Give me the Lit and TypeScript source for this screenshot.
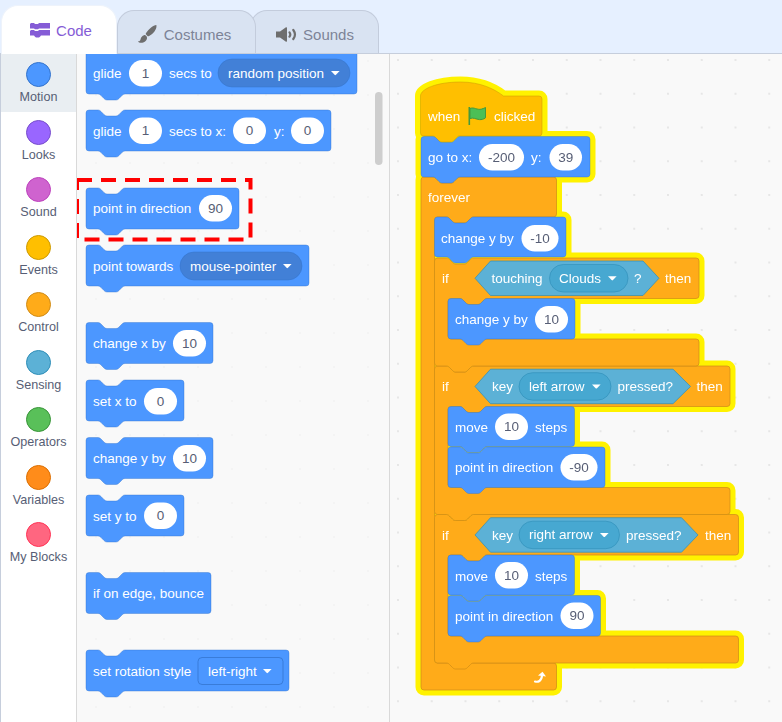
import { LitElement, html, css, svg } from "lit";
import { customElement } from "lit/decorators.js";

const NOTCH = "c1.5 0 2.25 .75 3 1.5l3 3c.75 .75 1.5 1.5 3 1.5h9c1.5 0 2.25-.75 3-1.5l3-3c.75-.75 1.5-1.5 3-1.5";
const NOTCH_BACK = "c-1.5 0-2.25 .75-3 1.5l-3 3c-.75 .75-1.5 1.5-3 1.5h-9c-1.5 0-2.25-.75-3-1.5l-3-3c-.75-.75-1.5-1.5-3-1.5";
const R = 3;

function stackPath(x: number, y: number, w: number, h: number) {
  const r = x + w;
  const b = y + h;
  return `M${x} ${y + R}a${R} ${R} 0 0 1 ${R}-${R}H${x + 12}${NOTCH}H${r - R}a${R} ${R} 0 0 1 ${R} ${R}V${b - R}a${R} ${R} 0 0 1-${R} ${R}H${x + 39}${NOTCH_BACK}H${x + R}a${R} ${R} 0 0 1-${R}-${R}Z`;
}

function hatPath(x: number, y: number, w: number, h: number) {
  const r = x + w;
  const b = y + h;
  return `M${x} ${y}C${x} ${y - 7} ${x + 16} ${y - 14} ${x + 40} ${y - 14}C${x + 60} ${y - 14} ${x + 74} ${y - 7} ${x + 83} ${y}H${r - R}a${R} ${R} 0 0 1 ${R} ${R}V${b - R}a${R} ${R} 0 0 1-${R} ${R}H${x + 39}${NOTCH_BACK}H${x + R}a${R} ${R} 0 0 1-${R}-${R}Z`;
}

/** C-shaped block: header row, arm down the left, foot row. */
function cPath(x: number, y: number, headW: number, headH: number, armX: number, footY: number, footW: number, footH: number, foot: boolean) {
  const hr = x + headW;
  const hb = y + headH;
  const fr = x + footW;
  const fb = footY + footH;
  const tail = foot ? `H${x + 39}${NOTCH_BACK}H${x + R}` : `H${x + R}`;
  return `M${x} ${y + R}a${R} ${R} 0 0 1 ${R}-${R}H${x + 12}${NOTCH}H${hr - R}a${R} ${R} 0 0 1 ${R} ${R}V${hb - R}a${R} ${R} 0 0 1-${R} ${R}H${armX + 39}${NOTCH_BACK}H${armX + R}a${R} ${R} 0 0 0-${R} ${R}V${footY - R}a${R} ${R} 0 0 0 ${R} ${R}H${fr - R}a${R} ${R} 0 0 1 ${R} ${R}V${fb - R}a${R} ${R} 0 0 1-${R} ${R}${tail}a${R} ${R} 0 0 1-${R}-${R}Z`;
}

function hexPath(x1: number, x2: number, x3: number, x4: number, top: number, bottom: number) {
  const mid = (top + bottom) / 2;
  return `M${x1} ${mid}L${x2} ${top}H${x3}L${x4} ${mid}L${x3} ${bottom}H${x2}Z`;
}

const label = (x: number, y: number, s: string) =>
  svg`<text class="lbl" x=${x} y=${y}>${s}</text>`;

const pill = (x: number, w: number, top: number, h: number, value: string) => svg`
  <rect class="pill" x=${x} y=${top} width=${w} height=${h} rx=${h / 2}></rect>
  <text class="val" x=${x + w / 2} y=${top + h / 2 + 4.5}>${value}</text>`;

const arrow = (x: number, cy: number) =>
  svg`<path class="arrow" d="M${x} ${cy - 2}h8.6l-3.6 3.8a1 1 0 0 1-1.4 0Z"></path>`;

const dropdown = (cls: string, x: number, w: number, top: number, h: number, rx: number, textX: number, value: string, arrowX: number) => svg`
  <rect class=${cls} x=${x} y=${top} width=${w} height=${h} rx=${rx}></rect>
  <text class="lbl" x=${textX} y=${top + h / 2 + 4.5}>${value}</text>
  ${arrow(arrowX, top + h / 2)}`;

const stack = (x: number, y: number, w: number, h: number) =>
  svg`<path class="motion" d=${stackPath(x, y, w, h)}></path>`;

const pointBlock = (y: number, w: number, pillW: number, value: string) => svg`
  ${stack(448, y, w, 40.5)}
  ${label(455, y + 25, "point in direction")}
  ${pill(560.5, pillW, y + 7, 26.5, value)}`;

const moveBlock = (y: number) => svg`
  ${stack(448, y, 126.5, 40)}
  ${label(455, y + 25.5, "move")}
  ${pill(495, 33, y + 7, 26.5, "10")}
  ${label(535, y + 25.5, "steps")}`;

const hexBool = (x3: number, x4: number, top: number) =>
  svg`<path class="sensing" d=${hexPath(475, 490.5, x3, x4, top, top + 34.5)}></path>`;

/* outlines of the running script, drawn once as the glow and once as the blocks */
const SCRIPT = {
  hat: hatPath(420.5, 96, 121.5, 40),
  goto: stackPath(421, 136.5, 169, 40.5),
  forever: cPath(421, 177, 135.5, 40, 434.5, 663, 135.5, 27, false),
  changeA: stackPath(434.5, 217, 131.5, 40),
  if1: cPath(434.5, 258, 264.5, 40.5, 448, 339, 264.5, 27, true),
  changeB: stackPath(448, 298.5, 127, 40.5),
  if2: cPath(434.5, 366, 295.5, 40.5, 448, 487.5, 295.5, 27, true),
  if3: cPath(434.5, 514.5, 304, 40.5, 448, 636, 304, 27, true),
  move1: stackPath(448, 406.5, 126.5, 40),
  point1: stackPath(448, 447, 157, 40.5),
  move2: stackPath(448, 555, 126.5, 40),
  point2: stackPath(448, 595.5, 152.5, 40.5),
};

const CATEGORIES: [string, string, string][] = [
  ["Motion", "#4c97ff", "#3373cc"],
  ["Looks", "#9966ff", "#774dcb"],
  ["Sound", "#cf63cf", "#bd42bd"],
  ["Events", "#ffbf00", "#cc9900"],
  ["Control", "#ffab19", "#cf8b17"],
  ["Sensing", "#5cb1d6", "#2e8eb8"],
  ["Operators", "#59c059", "#389438"],
  ["Variables", "#ff8c1a", "#db6e00"],
  ["My Blocks", "#ff6680", "#ff3355"],
];

@customElement("app-root")
export class AppRoot extends LitElement {
  static styles = css`
    :host {
      display: block;
      width: 782px;
      height: 722px;
      overflow: hidden;
      font-family: "Liberation Sans", Arial, sans-serif;
      background: #e6f0ff;
    }
    .tabs {
      display: flex;
      align-items: flex-end;
      height: 53px;
      padding-left: 1px;
      box-sizing: content-box;
      border-bottom: 1px solid #c6cedc;
    }
    .tab {
      display: flex;
      align-items: center;
      justify-content: center;
      box-sizing: border-box;
      height: 43px;
      gap: 7px;
      font-size: 15px;
      color: #7d8397;
      background: #d9e3f2;
      border: 1px solid #c3ccdc;
      border-bottom: none;
      border-radius: 17px 17px 0 0;
    }
    .tab.code {
      width: 116px;
      height: 49px;
      padding-left: 4px;
      margin-bottom: -1px;
      gap: 6px;
      color: #855cd6;
      background: #fff;
      border-color: #eef3fb;
      z-index: 3;
    }
    .tab.costumes {
      width: 139px;
      padding-top: 4px;
      padding-right: 4px;
      z-index: 2;
    }
    .tab.sounds {
      width: 129px;
      margin-left: -6px;
      padding-top: 4px;
      padding-left: 1px;
      gap: 6px;
      z-index: 1;
    }
    .main {
      display: flex;
      height: 668px;
      background: #fff;
      border-left: 1px solid #c6cedc;
    }
    .cats {
      display: flex;
      flex-direction: column;
      flex: none;
      width: 75px;
      background: #fff;
    }
    .cat {
      display: flex;
      flex-direction: column;
      align-items: center;
      box-sizing: border-box;
      height: 57.5px;
      padding-top: 8px;
      gap: 2px;
      font-size: 12.6px;
      line-height: 16px;
      color: #575e75;
    }
    .cat.on {
      background: #e9eef2;
    }
    .dot {
      box-sizing: border-box;
      width: 25px;
      height: 25px;
      border-radius: 50%;
      border: 1px solid;
    }
    .palette,
    .work {
      display: block;
      flex: none;
      height: 668px;
      background: #f9f9f9;
      border-left: 1px solid #d9d9d9;
    }
    .palette {
      width: 312px;
    }
    .work {
      width: 392px;
    }
    text {
      font-family: "Liberation Sans", Arial, sans-serif;
      font-size: 13.5px;
    }
    .lbl {
      fill: #fff;
    }
    .val {
      fill: #575e75;
      text-anchor: middle;
    }
    .pill {
      fill: #fff;
    }
    .arrow {
      fill: #fff;
    }
    .motion {
      fill: #4c97ff;
      stroke: #3373cc;
      stroke-opacity: 0.4;
    }
    .dd-motion {
      fill: #4280d7;
      stroke: #3373cc;
      stroke-opacity: 0.5;
    }
    .dd-square {
      fill: #4c97ff;
      stroke: #3373cc;
      stroke-opacity: 0.75;
    }
    .dd-sensing {
      fill: #47a8d1;
      stroke: #2e8eb8;
      stroke-opacity: 0.6;
    }
    .sensing {
      fill: #5cb1d6;
      stroke: #2e8eb8;
      stroke-opacity: 0.7;
    }
    .hat {
      fill: #ffbf00;
      stroke: #cc9900;
      stroke-opacity: 0.5;
    }
    .ctrl {
      fill: #ffab19;
      stroke: #cf8b17;
      stroke-opacity: 0.7;
    }
    .glow path {
      fill: #fff200;
      stroke: #fff200;
      stroke-width: 11;
      stroke-linejoin: round;
    }
    .glow {
      filter: blur(0.6px);
    }
    .soft {
      filter: blur(0.3px);
    }
    .thumb {
      fill: #cecece;
    }
    .marker {
      fill: none;
      stroke: #f00;
      stroke-width: 4;
      stroke-dasharray: 15 9;
    }
    .griddot {
      fill: #dedede;
    }
    .griddot-faint {
      fill: #f3f3f3;
    }
    .flag {
      fill: #4cbf56;
      stroke: #45993d;
      stroke-width: 1;
    }
    .flagpole {
      fill: #45993d;
    }
    .loop {
      fill: none;
      stroke: #fff;
      stroke-width: 2.2;
      stroke-linecap: round;
    }
    .loop-head {
      fill: #fff;
    }
  `;

  private paletteBlocks() {
    return svg`
      ${stack(86, 40, 271, 54)}
      ${label(93, 77.5, "glide")}
      ${pill(129, 33, 60, 26.5, "1")}
      ${label(169, 77.5, "secs to")}
      ${dropdown("dd-motion", 218, 132, 59, 28, 14, 228, "random position", 331)}

      ${stack(86, 110, 245, 41)}
      ${label(93, 135.5, "glide")}
      ${pill(129, 33, 117.5, 26.5, "1")}
      ${label(169, 135.5, "secs to x:")}
      ${pill(233, 33, 117.5, 26.5, "0")}
      ${label(274, 135.5, "y:")}
      ${pill(291, 33, 117.5, 26.5, "0")}

      ${stack(86, 188, 153, 41)}
      ${label(93, 213, "point in direction")}
      ${pill(199, 33, 195, 26.5, "90")}

      ${stack(86, 245, 223, 41)}
      ${label(93, 270.5, "point towards")}
      ${dropdown("dd-motion", 180, 122, 252, 28, 14, 190, "mouse-pointer", 283)}

      ${stack(86, 322.5, 127, 41)}
      ${label(93, 347.5, "change x by")}
      ${pill(173, 33, 330, 26.5, "10")}

      ${stack(86, 380, 98, 41)}
      ${label(93, 405.5, "set x to")}
      ${pill(144, 33, 388, 26.5, "0")}

      ${stack(86, 437.5, 127, 41)}
      ${label(93, 462.5, "change y by")}
      ${pill(173, 33, 445, 26.5, "10")}

      ${stack(86, 495, 98, 41)}
      ${label(93, 520.5, "set y to")}
      ${pill(144, 33, 502.5, 26.5, "0")}

      ${stack(86, 572.5, 125, 41)}
      ${label(93, 597.5, "if on edge, bounce")}

      ${stack(86, 650, 203, 41)}
      ${label(93, 675.5, "set rotation style")}
      ${dropdown("dd-square", 198, 85, 657.5, 27, 4, 208, "left-right", 263)}

      <rect class="thumb" x="375" y="92" width="7.5" height="73" rx="3.75"></rect>
      <rect class="marker" x="77" y="180" width="173.5" height="59.5"></rect>
    `;
  }

  private script() {
    return svg`
      <g class="glow">${Object.values(SCRIPT).map((d) => svg`<path d=${d}></path>`)}</g>
      <g class="soft">
        <path class="hat" d=${SCRIPT.hat}></path>
        ${label(428, 120.5, "when")}
        <path class="flagpole" d="M468.5 107h1.6v18h-1.6z"></path>
        <path class="flag" d="M470 108.5c4-1.8 7 1.8 11.5.6 1.6-.4 3-1 4-1.6v10.3c-2 1.5-4 2-6 1.8-3.6-.4-6.3-2.4-9.5-1Z"></path>
        ${label(494, 120.5, "clicked")}

        <path class="ctrl" d=${SCRIPT.forever}></path>
        <path class="motion" d=${SCRIPT.goto}></path>
        ${label(428, 161.5, "go to x:")}
        ${pill(479, 45, 144, 26.5, "-200")}
        ${label(531, 161.5, "y:")}
        ${pill(549.5, 32.5, 144, 26.5, "39")}
        ${label(428, 201.5, "forever")}

        <path class="ctrl" d=${SCRIPT.if3}></path>
        <path class="ctrl" d=${SCRIPT.if2}></path>
        <path class="ctrl" d=${SCRIPT.if1}></path>
        <path class="motion" d=${SCRIPT.changeA}></path>
        ${label(441, 243, "change y by")}
        ${pill(521.5, 37, 225, 26.5, "-10")}

        ${label(442, 283, "if")}
        ${hexBool(643, 659, 261)}
        ${label(491.5, 283, "touching")}
        ${dropdown("dd-sensing", 549.5, 78.5, 264.5, 27.5, 13.75, 559, "Clouds", 608)}
        ${label(634, 283, "?")}
        ${label(665, 283, "then")}

        <path class="motion" d=${SCRIPT.changeB}></path>
        ${label(455, 324, "change y by")}
        ${pill(535, 33, 306, 26.5, "10")}

        ${label(442, 391, "if")}
        ${hexBool(673, 690.5, 369.2)}
        ${label(492, 391, "key")}
        ${dropdown("dd-sensing", 519, 92, 372.7, 27.5, 13.75, 529, "left arrow", 592)}
        ${label(617.5, 391, "pressed?")}
        ${label(696.5, 391, "then")}
        ${moveBlock(406.5)}
        ${pointBlock(447, 157, 37, "-90")}

        ${label(442, 540, "if")}
        ${hexBool(681.5, 698, 517.7)}
        ${label(492, 540, "key")}
        ${dropdown("dd-sensing", 519, 100.5, 521.2, 27.5, 13.75, 529, "right arrow", 600)}
        ${label(626, 540, "pressed?")}
        ${label(705, 540, "then")}
        ${moveBlock(555)}
        ${pointBlock(595.5, 152.5, 33, "90")}

        <path class="loop" d="M535 681.5c3 .8 6.5-.2 7-6"></path>
        <path class="loop-head" d="M538 675.5l4.5-3.7 3.5 4.7Z"></path>
      </g>
    `;
  }

  render() {
    return html`
      <div class="tabs">
        <div class="tab code">
          <svg width="20" height="15" viewBox="0 0 20 15">
            <path fill="#855cd6" d="M1 0h3l1 1h3l1-1h11v5.5H9l-1 .8H5l-1-.8H0V1zM1 7h3l1 1h3l1-1h11v5.5H11l-1 1.2-1 .8H6l-1-.8-1-1.2H0V8z"></path>
          </svg>
          Code
        </div>
        <div class="tab costumes">
          <svg width="19" height="20" viewBox="0 0 20 20">
            <path fill="#6e6e6e" d="M19.3.6c.9 3.6-2.3 8.5-7.6 11.6-.6.3-1.2.4-1.7 0L8.5 10.6c-.4-.5-.4-1.1 0-1.6C11.600 4.600 16 1 19.300.6Z"></path>
            <path fill="#6e6e6e" d="M6.300 11.200c1.700-.3 3.300 1.300 3.200 3-.2 3-3.300 5.200-6.300 5.100-1.500-.1-2.700-.7-3.200-1.700 1.700.3 2.200-.6 2.700-2.200.5-2 1.800-3.900 3.600-4.200Z"></path>
          </svg>
          Costumes
        </div>
        <div class="tab sounds">
          <svg width="21" height="15" viewBox="0 0 21 15">
            <path fill="#6e6e6e" d="M0 4.500h4L10 .3c.6-.3 1-.1 1 .6v13.200c0 .7-.4.900-1 .6L4 10.500H0Z"></path>
            <path fill="none" stroke="#6e6e6e" stroke-width="2.200" stroke-linecap="round" d="M13.500 5.300c1 1.400 1 3 0 4.400M17.300 3c2 2.700 2 6.300 0 9"></path>
          </svg>
          Sounds
        </div>
      </div>
      <div class="main">
        <div class="cats">
          ${CATEGORIES.map(
            ([name, fill, edge], i) => html`
              <div class="cat ${i === 0 ? "on" : ""}">
                <span class="dot" style="background:${fill};border-color:${edge}"></span>
                ${name}
              </div>
            `,
          )}
        </div>
        <svg class="palette" viewBox="77 54 312 668">
          <defs>
            <pattern id="faint" x="95" y="298" width="34" height="34" patternUnits="userSpaceOnUse">
              <circle class="griddot-faint" cx="1" cy="1" r="1"></circle>
            </pattern>
          </defs>
          <rect x="77" y="54" width="312" height="668" fill="url(#faint)"></rect>
          ${this.paletteBlocks()}
        </svg>
        <svg class="work" viewBox="390 54 392 668">
          <defs>
            <pattern id="grid" x="397" y="59" width="33.75" height="33.75" patternUnits="userSpaceOnUse">
              <circle class="griddot" cx="1" cy="1" r="0.9"></circle>
            </pattern>
          </defs>
          <rect x="390" y="54" width="392" height="668" fill="url(#grid)"></rect>
          ${this.script()}
        </svg>
      </div>
    `;
  }
}
